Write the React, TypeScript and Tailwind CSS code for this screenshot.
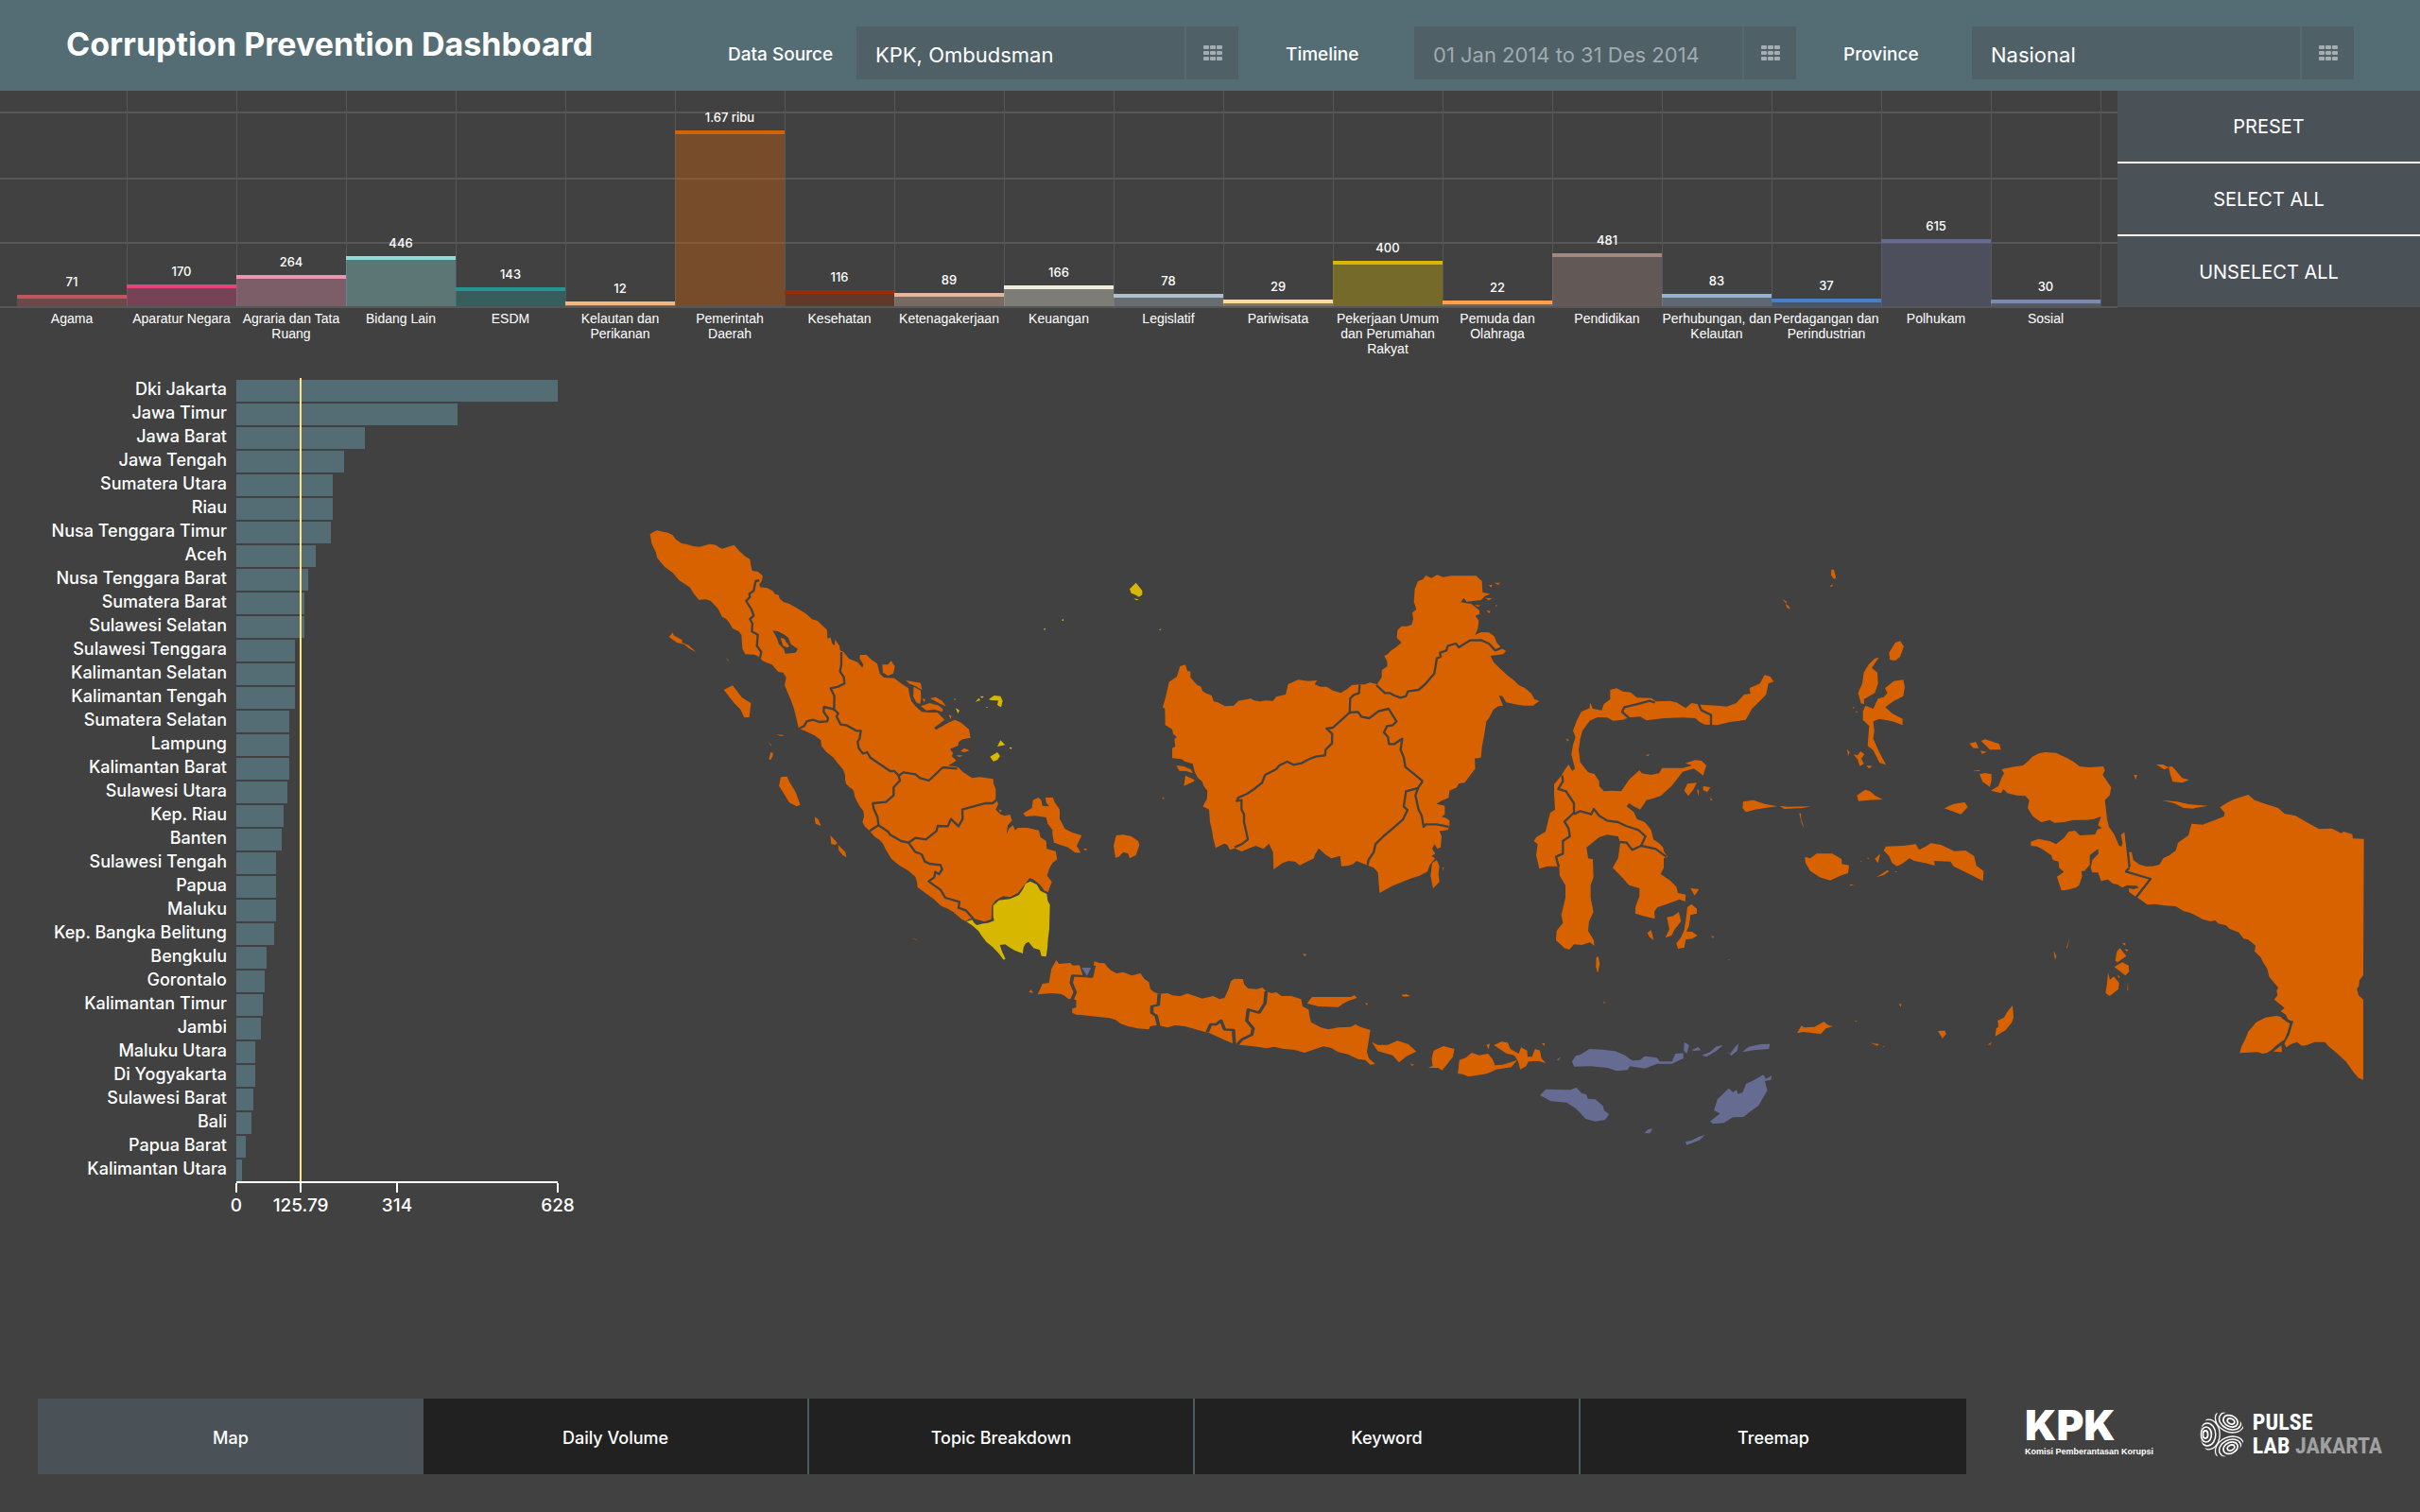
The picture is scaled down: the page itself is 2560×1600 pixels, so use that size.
import React from "react";

type Sector = { name: string; value: number; label?: string; line: string; fill: string };

const sectors: Sector[] = [
  { name: "Agama", value: 71, line: "border-[#c0565e]", fill: "bg-[#c0565e]/35" },
  { name: "Aparatur Negara", value: 170, line: "border-[#e0457f]", fill: "bg-[#e0457f]/35" },
  { name: "Agraria dan Tata Ruang", value: 264, line: "border-[#ec94b2]", fill: "bg-[#ec94b2]/35" },
  { name: "Bidang Lain", value: 446, line: "border-[#8edbd8]", fill: "bg-[#8edbd8]/35" },
  { name: "ESDM", value: 143, line: "border-[#259590]", fill: "bg-[#259590]/35" },
  { name: "Kelautan dan Perikanan", value: 12, line: "border-[#f6b67c]", fill: "bg-[#f6b67c]/35" },
  { name: "Pemerintah Daerah", value: 1670, label: "1.67 ribu", line: "border-[#d96200]", fill: "bg-[#d96200]/35" },
  { name: "Kesehatan", value: 116, line: "border-[#9c2c03]", fill: "bg-[#9c2c03]/35" },
  { name: "Ketenagakerjaan", value: 89, line: "border-[#e3b69f]", fill: "bg-[#e3b69f]/35" },
  { name: "Keuangan", value: 166, line: "border-[#f0ecdc]", fill: "bg-[#f0ecdc]/35" },
  { name: "Legislatif", value: 78, line: "border-[#afbfcc]", fill: "bg-[#afbfcc]/35" },
  { name: "Pariwisata", value: 29, line: "border-[#f9dc95]", fill: "bg-[#f9dc95]/35" },
  { name: "Pekerjaan Umum dan Perumahan Rakyat", value: 400, line: "border-[#d8b700]", fill: "bg-[#d8b700]/35" },
  { name: "Pemuda dan Olahraga", value: 22, line: "border-[#fea04c]", fill: "bg-[#fea04c]/35" },
  { name: "Pendidikan", value: 481, line: "border-[#a0887f]", fill: "bg-[#a0887f]/35" },
  { name: "Perhubungan, dan Kelautan", value: 83, line: "border-[#93b3d2]", fill: "bg-[#93b3d2]/35" },
  { name: "Perdagangan dan Perindustrian", value: 37, line: "border-[#4a7fc6]", fill: "bg-[#4a7fc6]/35" },
  { name: "Polhukam", value: 615, line: "border-[#656b91]", fill: "bg-[#656b91]/35" },
  { name: "Sosial", value: 30, line: "border-[#7a8bb0]", fill: "bg-[#7a8bb0]/35" },
];

const provinces: [string, number][] = [
  ["Dki Jakarta", 628], ["Jawa Timur", 432], ["Jawa Barat", 251], ["Jawa Tengah", 211],
  ["Sumatera Utara", 188], ["Riau", 188], ["Nusa Tenggara Timur", 185], ["Aceh", 155],
  ["Nusa Tenggara Barat", 140], ["Sumatera Barat", 133], ["Sulawesi Selatan", 133],
  ["Sulawesi Tenggara", 115], ["Kalimantan Selatan", 115], ["Kalimantan Tengah", 115],
  ["Sumatera Selatan", 103], ["Lampung", 103], ["Kalimantan Barat", 103], ["Sulawesi Utara", 100],
  ["Kep. Riau", 92], ["Banten", 89], ["Sulawesi Tengah", 78], ["Papua", 78], ["Maluku", 78],
  ["Kep. Bangka Belitung", 74], ["Bengkulu", 59], ["Gorontalo", 55], ["Kalimantan Timur", 52],
  ["Jambi", 48], ["Maluku Utara", 37], ["Di Yogyakarta", 37], ["Sulawesi Barat", 33],
  ["Bali", 30], ["Papua Barat", 18], ["Kalimantan Utara", 11],
];
const MAX = 628;
const AVERAGE = 125.79;

type MapSheet = { transform: string; orange?: string[]; yellow?: string[]; purple?: string[]; gaps?: string[]; inner?: string[] };

const sheets: MapSheet[] = [
  {
    // Sumatra and its western and eastern islands
    transform: "translate(660 540) scale(0.33333)",
    orange: [
      "83,76 95,68 105,64 125,68 140,71 155,79 165,92 183,105 200,108 220,114 240,116 272,107 292,110 302,118 312,122 330,116 350,110 365,128 385,146 400,155 403,175 407,192 425,195 440,207 440,214 437,226 430,234 432,244 455,247 472,256 480,266 491,269 494,280 506,291 525,297 553,313 580,330 597,346 615,351 630,366 645,380 646,408 655,403 662,425 669,428 670,411 684,430 686,445 697,450 715,472 742,482 757,500 760,490 748,470 750,459 770,459 785,474 804,487 812,518 825,531 858,533 880,550 903,565 906,585 912,605 925,622 945,640 970,642 995,642 1018,665 985,690 990,697 1030,674 1050,665 1070,674 1095,695 1100,722 1075,727 1063,735 1060,748 1048,752 1035,758 1045,772 1040,780 1055,795 1030,810 1060,815 1075,830 1105,850 1130,847 1172,853 1173,868 1180,885 1180,915 1188,932 1180,950 1195,965 1208,970 1225,966 1232,985 1218,1000 1214,1030 1222,1010 1235,1000 1242,1016 1250,1008 1280,1008 1317,1016 1322,1038 1340,1050 1342,1075 1370,1082 1375,1108 1360,1120 1350,1138 1343,1160 1358,1180 1346,1212 1335,1208 1320,1188 1300,1172 1288,1167 1270,1190 1250,1215 1225,1228 1203,1225 1180,1238 1168,1255 1166,1298 1145,1306 1110,1296 1097,1297 1085,1305 1070,1297 1045,1275 1025,1264 1005,1255 985,1235 960,1217 932,1197 930,1180 925,1163 900,1142 875,1128 850,1108 840,1092 830,1075 822,1058 812,1047 795,1036 780,1018 765,1004 757,990 762,972 760,955 750,942 740,925 733,910 730,893 725,885 715,878 705,868 702,855 702,840 695,822 680,805 665,785 640,765 627,748 625,730 605,715 580,703 570,698 560,695 554,690 545,650 538,625 530,602 520,580 510,555 515,530 505,515 490,513 470,490 450,482 440,478 432,467 415,458 385,457 376,440 373,395 365,385 345,375 335,358 325,345 312,338 297,310 285,298 275,287 260,283 238,284 222,265 210,245 190,232 175,222 155,198 130,180 115,163 105,150 102,135 95,120 88,105",
      "143,402 155,388 158,397 185,412 184,420 205,428 229,450 210,440 190,425 168,420",
      "317,570 345,556 375,595 403,612 398,657 382,658 370,632 350,612",
      "324,468 332,476 331,479",
      "483,712 511,714 498,717",
      "460,735 468,745 468,749",
      "466,768 473,770 472,780 466,792 460,790",
      "498,847 518,845 525,862 545,895 560,935 548,940 525,928 505,895 492,875",
      "605,973 616,980 626,1002 608,995",
      "655,1032 677,1055 672,1062 658,1060",
      "680,1062 703,1085 706,1102 695,1095 682,1080",
      "820,490 838,490 848,478 860,495 855,518 838,525 822,515",
      "895,540 942,548 946,570 925,558 905,550",
      "920,560 942,572 943,600 940,615 928,610 918,590",
      "947,598 957,600 953,610",
      "972,597 990,593 1010,605 1022,622 1005,615",
      "942,622 970,612 1000,620 1013,632 1010,640 985,632 960,635",
      "1030,648 1040,653 1037,663",
      "1068,764 1080,755 1097,763 1080,768",
      "1055,778 1075,778 1065,784",
      "1267,962 1295,945 1298,920 1315,912 1325,920 1328,938 1350,940 1340,928 1338,912 1362,912 1366,925 1383,950 1383,980 1400,1012 1425,1024 1453,1032 1437,1065 1450,1087 1432,1087 1410,1070 1365,1055 1360,1030 1360,1015 1345,995 1340,975 1305,970 1275,972",
      "1457,1075 1470,1074 1466,1081",
      "1190,950 1199,952 1194,959",
      "914,1356 936,1367 924,1363",
    ],
    yellow: [
      "1087,1306 1105,1300 1112,1310 1120,1317 1140,1312 1155,1310 1175,1303 1172,1290 1172,1255 1190,1238 1225,1234 1253,1222 1265,1205 1275,1185 1290,1178 1310,1188 1322,1208 1342,1218 1345,1240 1352,1252 1350,1330 1346,1360 1344,1390 1340,1417 1325,1415 1320,1396 1300,1390 1284,1370 1275,1375 1268,1388 1266,1407 1240,1397 1225,1388 1210,1378 1193,1380 1200,1400 1211,1424 1205,1427 1188,1405 1170,1386 1150,1370 1135,1350 1125,1335 1105,1318",
      "1158,600 1175,588 1195,590 1202,605 1197,625 1190,622 1185,617 1188,604 1165,603",
      "1053,628 1065,635 1060,645",
      "1115,608 1127,596 1131,603",
      "1130,590 1143,591 1136,596",
      "1185,750 1195,730 1210,745",
      "1222,752 1232,753 1228,759",
      "1162,782 1185,768 1194,780 1185,793 1172,797",
      "1331,376 1339,376 1335,381",
      "1391,346 1395,346 1395,351 1391,351",
      "1048,598 1053,600 1050,603",
      "1148,625 1156,625 1152,628",
    ],
    gaps: [
      "430,222 418,225 412,255 398,265 400,275 388,288 405,315 412,335 400,345 408,360 406,385 425,395 422,430 436,450 432,468",
      "690,450 690,490 686,512 698,530 700,550 680,560 656,565 668,590 667,632",
      "667,632 635,624 634,640 648,660 645,670 620,672 600,665 580,670 572,685 556,693",
      "667,632 680,645 675,655 688,680 705,682 738,700 752,700 748,725 742,735 745,755 758,772 772,768 782,785 845,828 858,828 872,842",
      "872,842 888,832 925,838 940,850 968,858 1012,816 1058,820",
      "872,842 876,858 856,880 856,905 832,926 790,930 792,945 805,975 808,1000 780,1018",
      "808,1000 838,1020 845,1030 880,1050 903,1055",
      "903,1055 925,1040 958,1045 992,1018 996,1002 1028,1003 1038,980 1062,1003 1075,980 1074,950 1148,930 1170,930 1184,918",
      "903,1055 925,1085 945,1092 955,1115 970,1122 1005,1126 1010,1140 1000,1155 988,1148 985,1165 967,1178 1005,1205 1020,1230 1065,1243 1062,1262 1085,1270 1110,1298",
    ],
    inner: ["472,382 490,385 510,395 522,405 530,425 552,440 545,452 512,455 508,440 492,425 485,405"],
  },
  { transform: "translate(660 540) scale(0.33333)", orange: ["497,405 508,407 525,432 518,436 505,430"] },
  {
    // Java, Bali and Nusa Tenggara
    transform: "translate(1060 980) scale(0.523 0.33333)",
    orange: [
      "72,217 82,183 95,180 100,135 110,108 115,120 138,117 143,125 160,124 165,155 178,160 184,130 187,112 198,118 207,117 213,130 220,140 232,150 245,146 262,157 280,150 288,168 297,178 300,200 308,210 318,215 335,213 345,220 360,223 375,214 390,222 405,230 427,222 440,232 450,228 458,200 463,175 470,167 487,168 490,185 498,198 515,200 527,195 534,207 545,213 555,210 565,222 585,222 605,232 608,255 620,265 622,285 625,305 645,322 660,328 680,322 705,320 715,312 725,320 745,330 742,360 738,400 742,420 755,438 745,440 735,425 720,422 700,407 680,400 665,386 650,382 630,392 612,402 590,392 570,390 550,383 535,388 510,382 485,378 470,375 445,358 420,340 390,327 370,318 350,315 335,322 322,317 312,315 300,318 297,328 275,325 255,318 240,310 230,298 217,292 190,287 165,283 150,281 142,275 142,262 150,258 150,235 142,230 135,232 125,220 118,215 100,213",
      "617,245 627,225 705,225 713,220 718,228 700,238 690,246 680,257 640,255",
      "748,368 760,377 780,377 800,364 822,375 838,398 818,413 803,433 790,410 760,397",
      "826,436 833,440 829,444",
      "869,420 873,395 893,381 915,390 912,415 902,435 890,458 882,450 862,450 871,444",
      "925,425 938,418 950,402 965,410 983,405 992,422 997,442 1012,440 1028,433 1042,425 1030,448 1000,455 985,466 975,470 943,478 932,470 922,468",
      "995,378 1010,367 1023,370 1028,390 1045,405 1050,385 1062,395 1063,415 1072,415 1078,390 1088,395 1091,420 1100,435 1085,428 1065,430 1060,445 1048,455 1044,430 1036,410 1020,404",
      "980,377 987,373 984,391",
      "1092,372 1098,372 1096,380",
      "608,88 616,89 612,96",
      "808,218 818,216 826,223 812,224",
      "735,244 740,246 738,252",
      "1216,241 1221,243 1218,246",
      "54,210 59,202 63,212",
      "1202,100 1206,96 1209,120 1205,148 1202,130",
    ],
    purple: [
      "161,132 180,132 172,158",
      "1153,430 1160,412 1170,408 1188,390 1215,392 1240,397 1260,410 1275,427 1290,425 1300,413 1325,418 1330,430 1355,430 1362,405 1378,403 1378,420 1355,437 1325,437 1300,452 1270,445 1265,457 1243,460 1225,450 1190,445 1157,446",
      "1380,368 1390,378 1385,405 1379,395",
      "1395,393 1408,384 1414,394 1400,396",
      "1415,410 1432,400 1445,382 1458,378 1445,396 1425,415",
      "1467,395 1473,405 1482,385 1490,373 1487,396 1475,412",
      "1497,400 1510,383 1535,375 1553,374 1551,390 1520,394",
      "1122,425 1130,414 1126,426",
      "1088,537 1100,518 1150,520 1162,512 1172,530 1182,535 1185,548 1200,550 1215,570 1218,586 1228,597 1220,615 1200,620 1180,612 1168,590 1160,578 1142,560 1110,556",
      "1540,472 1545,485 1557,475 1555,488 1543,492 1548,522 1530,570 1512,590 1500,606 1478,607 1460,625 1438,628 1432,620 1452,595 1440,585 1447,550 1460,530 1470,515 1478,527 1486,520 1488,533 1498,528 1505,500 1520,490",
      "1382,685 1395,680 1410,668 1422,663 1410,680 1385,695",
      "1299,658 1307,645 1316,643 1310,658",
    ],
    gaps: [
      "160,122 167,157 181,161 186,125",
      "178,160 143,157 140,180 148,210 142,232",
      "318,215 316,250 303,255 303,275 312,285 317,318",
      "534,207 532,245 520,275 498,265 495,300 508,325 505,345 485,360 475,378",
      "415,337 422,312 433,312 443,300 450,328 468,330 470,375",
    ],
  },
  {
    // Kalimantan
    transform: "translate(1180 580) scale(0.33333)",
    orange: [
      "205,375 222,370 228,390 238,392 238,410 248,422 260,435 272,440 275,452 285,460 305,468 312,487 325,490 348,502 375,500 390,485 430,478 440,484 460,487 475,484 500,485 510,472 540,465 545,445 548,432 580,418 612,422 640,420 632,432 650,440 670,440 690,452 715,460 735,448 750,435 775,433 790,433 808,427 830,433 845,410 845,388 863,375 862,360 853,342 862,338 875,325 890,315 908,300 893,285 895,260 908,248 925,248 940,243 945,225 942,205 955,195 947,170 950,130 960,105 975,100 985,87 1003,95 1020,85 1040,92 1065,88 1145,88 1163,105 1165,140 1190,146 1172,152 1160,165 1115,170 1105,158 1096,172 1130,178 1145,190 1155,198 1155,210 1142,215 1153,230 1150,255 1142,275 1160,267 1185,268 1202,280 1210,300 1225,318 1240,327 1230,337 1190,342 1200,362 1220,382 1245,405 1265,420 1280,435 1300,445 1320,462 1330,480 1345,485 1325,500 1300,500 1280,498 1240,490 1228,470 1217,468 1230,500 1215,502 1200,512 1185,540 1177,550 1170,595 1163,630 1160,665 1140,668 1142,700 1125,722 1108,745 1090,747 1083,760 1060,770 1057,793 1035,802 1018,812 1045,818 1045,845 1035,853 1050,857 1060,865 1060,882 1055,895 1028,898 1035,915 1032,950 1022,955 1012,940 1005,955 1015,970 1003,978 1015,985 998,1005 990,1027 965,1040 940,1048 910,1060 880,1072 838,1095 833,1030 820,1015 800,1007 765,993 755,1003 740,1008 717,1010 713,977 685,985 665,972 645,953 632,975 630,985 605,997 585,1007 570,995 550,993 530,1000 502,1020 500,965 487,938 470,955 445,945 420,955 400,963 378,953 363,958 355,942 345,938 318,952 310,920 306,895 300,870 297,830 277,820 290,797 292,770 280,755 275,740 262,730 252,712 245,685 220,677 210,670 180,667 180,635 190,630 187,605 195,600 183,590 180,575 158,562 157,510 150,505 160,470 170,425 195,408",
      "193,690 215,692 240,703 245,715 225,708 203,707",
      "222,722 250,735 250,740 217,755",
      "147,792 155,793 153,798",
      "1005,1000 1020,990 1028,1010 1025,1035 1028,1060 1008,1080 1000,1040",
      "1038,1015 1042,1012 1040,1026",
      "1185,118 1196,116 1192,125",
      "1203,110 1220,110 1215,117",
      "1173,158 1195,160 1185,166",
      "1178,198 1190,200 1185,208",
      "1140,180 1160,182 1150,186",
      "1206,180 1212,182 1208,186",
      "-6,945 2,912 25,910 50,915 72,930 76,942 65,975 45,985 40,970 25,965 10,980 0,983",
    ],
    yellow: ["45,130 65,110 85,135 85,148 75,155 62,148 50,143", "58,160 75,163 66,166", "138,259 146,256 142,261"],
    gaps: [
      "828,435 855,460 870,460 885,468 905,475 922,470 928,455 962,450 985,430 1000,412 1012,398 1020,350 1032,345 1030,332 1050,325 1055,310 1080,303 1090,315 1105,305 1125,293 1160,292 1185,303 1205,325 1227,316",
      "775,433 773,460 755,467 745,478 743,522",
      "743,522 770,520 780,535 805,540 835,518 867,510 878,528 892,550 880,562 862,565 852,585 865,600 868,622 885,622 910,605 905,640 915,665 920,695 945,715 975,740",
      "743,522 718,545 690,570 670,573 688,590 687,620 667,640 665,658 635,662 610,672 590,683 565,688 545,678 520,690 510,702 475,720 465,745 440,765 418,780 390,792 385,803 400,800 400,830 408,845 408,870 415,900 420,925 400,940 378,950",
      "975,740 960,762 922,772 915,820 927,832 912,862 880,890 850,915 825,940 820,965 803,990 800,1007",
      "960,762 952,785 962,830 972,850 978,885 985,877 1020,877 1058,885",
    ],
  },
  {
    // Sulawesi and Maluku
    transform: "translate(1600 580) scale(0.33333)",
    orange: [
      "800,403 818,408 829,424 812,430 805,465 785,485 760,510 740,545 715,549 690,552 650,562 610,560 595,553 580,540 540,538 480,540 425,547 405,535 370,538 350,545 320,548 300,538 270,537 245,548 222,580 215,605 210,640 215,680 240,712 260,717 275,740 275,755 290,772 315,770 345,772 370,735 403,705 410,715 440,720 465,715 475,698 540,698 570,690 548,683 580,673 600,675 615,690 605,722 590,710 575,700 540,710 505,755 470,787 445,795 425,800 405,830 385,820 370,810 362,820 385,838 395,860 420,870 440,895 447,925 465,937 478,950 480,962 492,980 480,985 480,1015 470,1035 500,1055 520,1075 525,1095 550,1100 548,1122 530,1115 490,1130 460,1140 450,1155 452,1177 415,1168 390,1160 390,1140 403,1105 403,1080 370,1070 350,1048 318,1015 335,985 342,935 335,915 300,910 275,918 235,950 240,985 255,988 257,1045 248,1070 248,1110 257,1155 243,1185 240,1215 258,1245 260,1262 245,1252 220,1260 195,1258 180,1275 165,1270 138,1245 140,1215 160,1190 155,1165 168,1110 168,1070 150,1040 148,1010 110,1010 85,1018 75,975 80,940 68,930 75,918 105,900 112,870 120,840 135,830 132,780 132,750 155,722 165,705 178,687 190,708 198,700 187,655 192,625 200,600 192,580 203,550 218,520 245,508 246,490 255,510 283,515 290,495 310,480 310,450 330,445 350,455 375,458 395,475 440,476 455,487 500,485 520,490 550,508 568,492 600,497 650,500 680,503 710,492 735,465 755,462 752,445 785,430",
      "545,770 555,748 585,745 575,765 558,787",
      "605,755 628,760 618,775 605,768",
      "586,765 592,770 589,790",
      "628,790 634,800 629,802",
      "565,1080 592,1083 578,1103",
      "555,1140 568,1130 585,1145 585,1160 565,1165 560,1200 552,1217 570,1218 587,1230 570,1240 550,1243 545,1268 525,1272 520,1255 535,1235 545,1213 550,1180",
      "490,1172 510,1168 528,1155 535,1185 515,1210 505,1230 485,1237 498,1210",
      "428,1222 440,1212 448,1245 435,1235",
      "267,1295 272,1320 270,1348 265,1330",
      "631,1230 639,1233 636,1239",
      "684,1305 690,1307 686,1309",
      "1012,68 1020,68 1027,95 1020,98 1011,85",
      "1007,122 1016,114 1015,122",
      "856,162 870,170 869,176",
      "866,178 875,182 882,194 872,190",
      "170,604 180,610 174,613",
      "422,657 435,654 430,660",
      "1195,332 1215,300 1230,295 1242,312 1230,345 1215,357 1198,355",
      "1163,347 1140,380 1158,395 1160,430 1150,460 1115,480 1116,495 1106,493 1097,460 1110,430 1115,395 1130,370 1150,350",
      "1120,500 1145,510 1160,478 1178,473 1190,460 1182,445 1210,422 1240,418 1245,440 1240,470 1210,485 1183,505 1205,525 1238,542 1238,562 1205,550 1165,542 1145,550 1148,580 1145,605 1160,640 1185,688 1165,682 1145,642 1127,628 1132,565 1112,545 1112,518",
      "1062,638 1070,648 1065,660",
      "1082,655 1095,658 1105,645 1117,655 1107,668 1115,685 1102,692 1096,672",
      "1123,690 1142,692 1132,700",
      "1079,504 1085,506 1082,510",
      "1090,516 1095,520 1091,523",
      "1093,785 1108,775 1120,767 1135,772 1150,785 1175,798 1130,800 1098,803",
      "732,805 765,800 800,812 840,820 800,825 770,830 740,838 730,825",
      "848,818 870,821 948,820 920,825 862,828",
      "910,842 915,842 916,860 926,890 918,875",
      "928,980 945,985 965,970 1015,970 1045,988 1045,1003 1068,1007 1065,1032 1040,1040 1008,1055 975,1045 945,1025 930,1000",
      "1178,960 1185,947 1240,945 1280,940 1290,958 1315,945 1328,937 1360,942 1402,962 1438,960 1465,978 1472,1008 1495,1025 1493,1057 1450,1035 1400,1010 1390,995 1338,993 1340,1008 1310,1000 1275,993 1260,985 1240,1000 1220,1010 1205,1000 1195,978",
      "1150,987 1167,970 1160,1000",
      "1155,1045 1175,1032 1190,1022 1195,1026 1178,1038",
      "1068,1072 1075,1067 1083,1070",
      "1213,1025 1222,1027 1216,1029",
      "1105,993 1110,995 1106,997",
      "1125,983 1133,984 1128,987",
    ],
    gaps: [
      "452,490 435,485 405,493 355,505 348,520 372,542",
      "590,494 600,515 630,530 630,562",
      "158,722 160,740 145,765 170,772 195,810 195,840 165,868 178,890 182,915 160,930 160,970 138,980 147,1012",
      "195,845 215,835 250,845 258,828 275,850 300,865 335,870 360,882 400,895 422,915 408,945",
      "340,933 362,935 380,958 408,945 455,955 488,980",
    ],
  },
  {
    // Papua
    transform: "translate(2040 740) scale(0.33333)",
    orange: [
      "232,222 265,215 300,210 315,198 330,182 350,172 370,168 405,170 440,187 460,198 480,213 510,216 555,213 560,225 553,240 568,262 580,280 575,305 560,320 567,380 573,405 590,430 605,465 613,467 616,455 611,430 622,422 637,530 627,547 705,570 658,627 637,612 635,600 650,603 668,598 660,592 630,590 615,598 600,588 585,585 570,572 548,577 538,550 520,550 515,535 520,510 540,490 538,475 512,495 512,525 495,545 485,545 488,562 478,590 470,597 440,605 422,607 408,563 430,548 415,535 413,515 395,510 390,495 360,475 345,467 325,465 325,452 350,443 370,448 385,450 405,460 430,440 445,420 465,417 480,432 520,430 530,428 535,415 550,408 538,400 548,372 525,380 500,383 460,383 430,390 400,392 385,383 358,390 340,378 330,370 315,345 320,320 307,307 280,305 250,298 238,285 230,298 198,290 222,275 232,250 240,235",
      "925,343 945,330 970,317 1015,303 1035,320 1070,332 1110,345 1130,363 1165,370 1200,390 1240,412 1280,410 1310,425 1318,420 1345,428 1347,442 1382,443 1380,875 1368,892 1366,910 1360,920 1365,940 1380,953 1380,1208 1365,1202 1350,1185 1325,1150 1290,1118 1270,1102 1258,1088 1225,1088 1200,1098 1185,1100 1170,1088 1150,1095 1135,1105 1130,1092 1145,1065 1157,1025 1140,1015 1135,1002 1118,990 1130,980 1118,970 1097,953 1108,940 1105,925 1110,915 1082,882 1075,855 1062,835 1055,820 1035,800 1038,782 1015,763 1000,760 985,740 955,728 945,718 920,712 910,702 895,705 870,698 850,687 830,677 810,673 785,657 750,655 720,650 695,652 663,629 705,572 630,547 640,530 636,485 645,485 650,510 670,525 690,530 710,530 733,525 745,505 765,495 785,480 792,455 825,432 835,395 870,398 905,385 938,372 940,360",
      "988,1123 993,1103 1005,1080 1015,1055 1040,1025 1070,1010 1105,1005 1125,1010 1147,1030 1140,1055 1130,1080 1105,1098 1090,1112 1075,1122 1060,1125 1045,1120 1005,1122",
      "1095,1118 1120,1098 1122,1120",
      "723,207 745,207 763,217 748,223",
      "762,215 772,212 782,222 795,238 805,250 828,256 805,265 775,262 768,240",
      "740,320 790,325 825,333 888,338 850,344 840,347 810,345 780,330",
      "652,240 662,240 658,256",
      "130,140 150,135 160,155 143,155",
      "167,132 180,127 225,142 230,160 195,160",
      "165,163 185,167 170,173",
      "162,238 180,234 200,238 200,258 195,278 172,262",
      "140,227 165,224 160,228",
      "50,346 80,332 115,327 125,342 103,365",
      "598,800 608,790 628,815 600,835 593,830",
      "590,850 615,835 635,845 637,865 625,877",
      "570,868 576,890 588,880 605,900 603,920 575,942 562,932 567,900",
      "615,775 625,773 625,782",
      "622,793 635,795 630,801",
      "600,876 608,880 604,886",
      "633,897 634,925 631,925",
      "449,757 440,791 438,788",
      "397,798 406,815 402,827",
      "267,972 270,1010 265,1025 245,1050 212,1070 215,1045 222,1040 220,1020 240,1010 252,990",
      "188,1097 200,1088 198,1096",
      "30,1053 52,1052 56,1062 45,1077",
      "298,972 308,978 304,976",
    ],
    gaps: ["637,535 627,547 705,570 658,630", "627,430 638,532", "1122,1008 1140,1022 1157,1025"],
  },
  {
    // Southern Maluku
    transform: "translate(1820 1040) scale(0.33333)",
    orange: [
      "243,160 257,136 265,142 298,140 328,124 342,134 356,138 335,145 318,163 285,158 262,156",
      "474,190 485,193 503,194 498,200",
      "513,202 522,202 518,204",
      "566,68 574,66 573,77",
      "425,121 434,121 430,124",
    ],
  },
];

function SheetShapes({ sheet }: { sheet: MapSheet }) {
  return (
    <g transform={sheet.transform}>
      {sheet.orange?.map((p) => <polygon key={p} points={p} className="fill-[#d96200]" />)}
      {sheet.yellow?.map((p) => <polygon key={p} points={p} className="fill-[#d8b700]" />)}
      {sheet.gaps?.map((p) => (
        <polyline key={p} points={p} className="fill-none stroke-[#414141] stroke-[7]" strokeLinejoin="round" />
      ))}
      {sheet.purple?.map((p) => <polygon key={p} points={p} className="fill-[#656b91]" />)}
      {sheet.inner?.map((p) => <polygon key={p} points={p} className="fill-[#414141]" />)}
    </g>
  );
}

function IndonesiaMap() {
  return (
    <svg viewBox="640 376 1920 900" className="block h-auto w-full" role="img" aria-label="Map of Indonesia by leading topic">
      {sheets.map((s, i) => <SheetShapes key={i} sheet={s} />)}
    </svg>
  );
}

function GridIcon() {
  const cells = [0, 1, 2];
  return (
    <svg viewBox="0 0 20 16" className="h-4 w-5 fill-[#a3adb2]" aria-hidden="true">
      {cells.map((r) => cells.map((c) => <rect key={`${r}${c}`} x={c * 7} y={r * 6} width="6" height="4" rx="1" />))}
    </svg>
  );
}

function FilterField({ id, label, value, muted }: { id: string; label: string; value: string; muted?: boolean }) {
  return (
    <div className="flex w-[540px] items-center">
      <label htmlFor={id} className="w-[136px] pt-1 text-[19px] font-medium">{label}</label>
      <div className="flex h-14 min-w-0 flex-1 bg-[#4f6067]">
        <input
          id={id}
          defaultValue={value}
          className={muted ? "min-w-0 flex-1 bg-transparent px-5 pt-1 text-[22px] text-[#a0abb0] outline-none" : "min-w-0 flex-1 bg-transparent px-5 pt-1 text-[22px] text-white outline-none"}
        />
        <button aria-label={`Choose ${label}`} className="flex w-[57px] items-center justify-center border-l-2 border-[#546a71]">
          <GridIcon />
        </button>
      </div>
    </div>
  );
}

function SectorChart() {
  return (
    <section className="min-w-0 flex-1">
      <div className="relative h-[230px] border-b-2 border-[#575757]">
        <div className="absolute inset-x-0 top-[22px] border-t-2 border-[#575757]" />
        <div className="absolute inset-x-0 top-[92px] border-t-2 border-[#575757]" />
        <div className="absolute inset-x-0 top-[160px] border-t-2 border-[#575757]" />
        <div className="relative flex h-full px-[18px]">
          {sectors.map((s) => (
            <div key={s.name} className="flex min-w-0 flex-1 flex-col justify-end shadow-[1px_0_0_0_#575757]">
              <span className="mb-1.5 text-center text-[13px] leading-4 font-medium">{s.label ?? s.value}</span>
              <div className={`border-t-4 ${s.line} ${s.fill}`} style={{ height: 4 + Math.round(s.value * 0.109) }} />
            </div>
          ))}
        </div>
      </div>
      <div className="flex px-[18px] pt-[3px] font-['Liberation_Sans',sans-serif]">
        {sectors.map((s) => (
          <span key={s.name} className="min-w-0 flex-1 text-center text-[14px] leading-4">{s.name}</span>
        ))}
      </div>
    </section>
  );
}

function ProvinceChart() {
  const pct = (v: number) => `${(v / MAX) * 100}%`;
  return (
    <section className="w-[640px] shrink-0 pt-6">
      {provinces.map(([name, value]) => (
        <div key={name} className="flex h-[25px]">
          <span className="w-[240px] text-right text-[18px] leading-[23px] font-medium">{name}</span>
          <div className="ml-2.5 w-[340px] pt-0.5">
            <div className="h-[23px] bg-[#546c73]" style={{ width: pct(value) }} />
          </div>
        </div>
      ))}
      <div className="relative ml-[250px] h-[38px] w-[340px] border-t-2 border-white">
        <div className="absolute bottom-[38px] -ml-px h-[850px] w-0.5 bg-[#ffe47a]" style={{ left: pct(AVERAGE) }} />
        {[0, AVERAGE, 314, MAX].map((t) => (
          <div key={t} className="absolute top-0 flex w-20 -translate-x-1/2 flex-col items-center" style={{ left: pct(t) }}>
            <span className="h-2.5 w-0.5 bg-white" />
            <span className="text-[19px] leading-7 font-medium">{t}</span>
          </div>
        ))}
      </div>
    </section>
  );
}

function PulseMark() {
  const lobes = [
    { x: 33, y: 10, a: 25 },
    { x: 33, y: 38, a: -25 },
  ];
  return (
    <svg viewBox="0 0 48 48" className="size-12 shrink-0" aria-hidden="true">
      <clipPath id="pulse-disc"><circle cx="24" cy="24" r="23.5" /></clipPath>
      <g clipPath="url(#pulse-disc)" className="fill-none stroke-white">
        <g transform="translate(6 24)">
          <ellipse rx="2.6" ry="4" strokeWidth="1.8" />
          <ellipse cx="0.8" rx="5.6" ry="8" strokeWidth="1.7" />
          <ellipse cx="2" rx="8.8" ry="12" strokeWidth="1.5" />
          <ellipse cx="3.2" rx="12" ry="15.8" strokeWidth="1.3" />
        </g>
        {lobes.map((l) => (
          <g key={l.y} transform={`translate(${l.x} ${l.y}) rotate(${l.a})`}>
            <ellipse rx="4" ry="2.8" strokeWidth="1.8" />
            <ellipse cx="-0.5" rx="8" ry="5.8" strokeWidth="1.7" />
            <ellipse cx="-1" rx="12" ry="8.8" strokeWidth="1.5" />
            <ellipse cx="-1.5" rx="15.8" ry="11.8" strokeWidth="1.3" />
          </g>
        ))}
      </g>
    </svg>
  );
}

const tabs = ["Map", "Daily Volume", "Topic Breakdown", "Keyword", "Treemap"];

export default function App() {
  return (
    <div className="flex min-h-screen flex-col bg-[#414141] font-['Inter',sans-serif] text-white">
      <header className="flex h-24 items-center justify-between bg-[#546c73] pr-[70px] pl-[70px]">
        <h1 className="pb-0.5 text-[34px] leading-10 font-bold whitespace-nowrap">Corruption Prevention Dashboard</h1>
        <div className="flex gap-[50px] pt-4">
          <FilterField id="source" label="Data Source" value="KPK, Ombudsman" />
          <FilterField id="timeline" label="Timeline" value="01 Jan 2014 to 31 Des 2014" muted />
          <FilterField id="province" label="Province" value="Nasional" />
        </div>
      </header>

      <div className="flex h-[280px] items-start">
        <SectorChart />
        <div className="grid w-80 shrink-0 gap-0.5 bg-white text-[20px]">
          {["PRESET", "SELECT ALL", "UNSELECT ALL"].map((t) => (
            <button key={t} className="h-[75px] bg-[#4a5258]">{t}</button>
          ))}
        </div>
      </div>

      <main className="flex flex-1">
        <ProvinceChart />
        <div className="min-w-0 flex-1">
          <IndonesiaMap />
        </div>
      </main>

      <footer className="flex items-center pb-10 pl-10">
        <nav className="grid h-20 w-[2040px] shrink grid-cols-5 text-[18px] font-medium">
          {tabs.map((t, i) => (
            <button
              key={t}
              className={i === 0 ? "bg-[#4a5258] pt-0.5" : i === 4 ? "bg-[#212121] pt-0.5" : "border-r-2 border-[#4a5a5e] bg-[#212121] pt-0.5"}
            >
              {t}
            </button>
          ))}
        </nav>
        <div className="flex flex-1 items-center justify-between pr-10 pl-[62px]">
          <div className="pb-1">
            <div className="text-[44px] leading-8 font-black">KPK</div>
            <div className="pt-1 font-['Liberation_Sans',sans-serif] text-[9px] leading-4 font-bold whitespace-nowrap">Komisi Pemberantasan Korupsi</div>
          </div>
          <div className="flex items-center gap-2 pb-1">
            <PulseMark />
            <div className="font-['Roboto_Condensed','Roboto',sans-serif] text-[24px] leading-[25px] font-bold whitespace-nowrap">
              <div>PULSE</div>
              <div>LAB <span className="text-[#a0a0a0]">JAKARTA</span></div>
            </div>
          </div>
        </div>
      </footer>
    </div>
  );
}
